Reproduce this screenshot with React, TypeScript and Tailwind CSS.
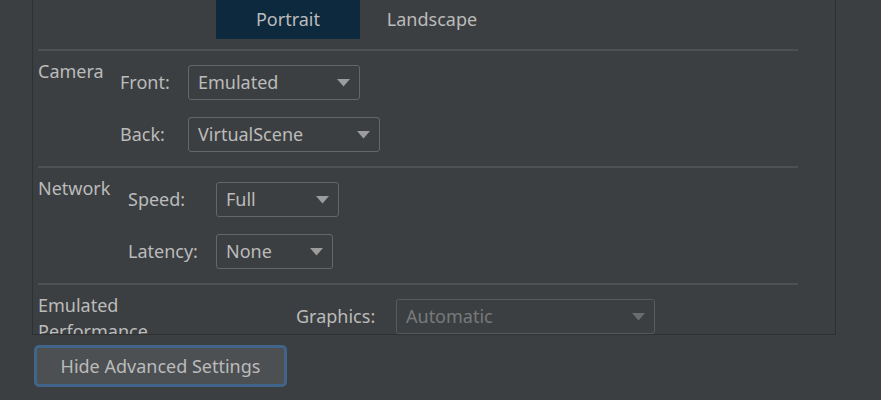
import React from 'react';

function Arrow({ muted }: { muted?: boolean }) {
	return (
		<svg width="13" height="8" viewBox="0 0 13 8" className="shrink-0">
			<polygon points="0,0 13,0 6.5,7.5" fill={muted ? '#6a6c6e' : '#9c9c9c'} />
		</svg>
	);
}

function Dropdown({ value, width, disabled }: { value: string; width: string; disabled?: boolean }) {
	return (
		<div
			className={`${width} h-[35px] flex items-center justify-between pl-[9px] pr-[9px] rounded-[3px] border ${
				disabled ? 'border-[#585b5d] text-[#777a7c]' : 'border-[#646769] text-[#bbbbbb]'
			}`}
		>
			<span>{value}</span>
			<Arrow muted={disabled} />
		</div>
	);
}

function Divider() {
	return <div className="ml-[5px] w-[760px] h-[2px] shrink-0 bg-[#4e5153]" />;
}

function Section({
	label,
	labelWidth,
	fieldWidth,
	rows,
}: {
	label: React.ReactNode;
	labelWidth: string;
	fieldWidth: string;
	rows: { name: string; value: string; width: string; disabled?: boolean }[];
}) {
	return (
		<div className="flex shrink-0 pl-[5px] pt-[7px] pb-[14px]">
			<div className={`${labelWidth} leading-[26px] shrink-0`}>{label}</div>
			<div className="flex flex-col gap-[17px] pt-[7px]">
				{rows.map((r) => (
					<div key={r.name} className="flex items-center">
						<span className={`${fieldWidth} shrink-0`}>{r.name}</span>
						<Dropdown value={r.value} width={r.width} disabled={r.disabled} />
					</div>
				))}
			</div>
		</div>
	);
}

export default function App() {
	return (
		<div
			className="w-[881px] h-[400px] bg-[#3c3f41] text-[#bbbbbb] text-[18px] overflow-hidden"
			style={{ fontFamily: '"Noto Sans", "Open Sans", sans-serif' }}
		>
			<div className="ml-[32px] w-[804px] h-[335px] border-l border-r border-b border-[#2e3032] overflow-hidden flex flex-col">
				<div className="flex pl-[183px] h-[39px] leading-[39px] shrink-0">
					<div className="w-[144px] text-center bg-[#0d293e]">Portrait</div>
					<div className="w-[144px] text-center">Landscape</div>
				</div>
				<div className="h-[10px] shrink-0" />
				<Divider />
				<Section
					label="Camera"
					labelWidth="w-[82px]"
					fieldWidth="w-[68px]"
					rows={[
						{ name: 'Front:', value: 'Emulated', width: 'w-[172px]' },
						{ name: 'Back:', value: 'VirtualScene', width: 'w-[192px]' },
					]}
				/>
				<Divider />
				<Section
					label="Network"
					labelWidth="w-[90px]"
					fieldWidth="w-[88px]"
					rows={[
						{ name: 'Speed:', value: 'Full', width: 'w-[123px]' },
						{ name: 'Latency:', value: 'None', width: 'w-[117px]' },
					]}
				/>
				<Divider />
				<Section
					label={
						<>
							Emulated
							<br />
							Performance
						</>
					}
					labelWidth="w-[258px]"
					fieldWidth="w-[100px]"
					rows={[{ name: 'Graphics:', value: 'Automatic', width: 'w-[259px]', disabled: true }]}
				/>
			</div>
			<button className="mt-[10px] ml-[34px] w-[253px] h-[42px] rounded-[5px] border-[3px] border-[#41658a] bg-[#4c5052] text-[#bbbbbb] text-[18px] leading-none">
				Hide Advanced Settings
			</button>
		</div>
	);
}
